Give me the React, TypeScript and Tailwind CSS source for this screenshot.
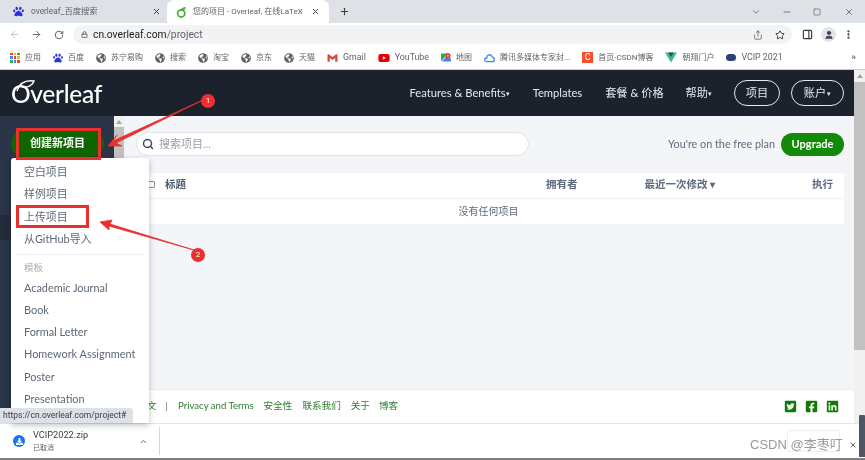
import React from "react";
import { ArrowLeft, ArrowRight, RotateCw, Lock, Plus, X, ChevronDown, Minus, Star, Share, MoreVertical, PanelRight, User, Search, ChevronUp, Square } from "lucide-react";
import { FaTwitterSquare, FaFacebookSquare, FaLinkedin, FaPaw, FaGlobeAmericas, FaYoutube, FaDownload } from "react-icons/fa";
import { SiGmail } from "react-icons/si";

const site = { fontFamily: 'Lato, "Noto Sans CJK SC", sans-serif' };
const ui = { fontFamily: 'Roboto, "Noto Sans CJK SC", sans-serif' };

function Globe() {
  return <FaGlobeAmericas className="w-[10px] h-[10px] text-[#5f6368] shrink-0" />;
}
function Paw({ size = 10 }: { size?: number }) {
  return <FaPaw className="text-[#2932e1] shrink-0" style={{ width: size, height: size }} />;
}

function Bm({ icon, label, big }: { icon: React.ReactNode; label: string; big?: boolean }) {
  return (
    <div className="flex items-center gap-[5px] shrink-0">
      {icon}
      <span className={big ? "text-[8.8px] text-[#5f6368] whitespace-nowrap" : "text-[8px] text-[#5f6368] whitespace-nowrap"}>{label}</span>
    </div>
  );
}

const menuA = ["空白项目", "样例项目", "上传项目", "从GitHub导入"];
const menuB = ["Academic Journal", "Book", "Formal Letter", "Homework Assignment", "Poster", "Presentation"];

export default function App() {
  return (
    <div className="relative w-[865px] h-[460px] overflow-hidden bg-white flex flex-col blur-[0.35px]" style={ui}>
      {/* tab strip */}
      <div className="h-[23px] bg-[#dee1e6] flex items-end shrink-0">
        <div className="w-[167px] h-[23px] flex items-center pl-[13px] pr-[6px] gap-[7px]">
          <Paw size={11} />
          <span className="text-[8.3px] text-[#5f6368] flex-1 whitespace-nowrap">overleaf_百度搜索</span>
          <X className="w-[9px] h-[9px] text-[#3c4043]" strokeWidth={2.5} />
        </div>
        <div className="w-[162px] h-[23px] bg-white rounded-t-[7px] flex items-center pl-[9px] pr-[9px] gap-[6px]">
          <svg width="11" height="12" viewBox="0 0 11 12" className="shrink-0">
            <circle cx="5.2" cy="7.4" r="3.6" fill="none" stroke="#4cae3c" strokeWidth="1.8" />
            <path d="M4 5 C5 2 7 1 10 1 C9.5 3 8 5 5.5 5Z" fill="#4cae3c" />
          </svg>
          <span className="text-[8px] text-[#5f6368] flex-1 whitespace-nowrap">您的项目 - Overleaf, 在线LaTeX</span>
          <X className="w-[9px] h-[9px] text-[#3c4043] shrink-0" strokeWidth={2.5} />
        </div>
        <div className="w-[30px] h-[23px] flex items-center justify-center">
          <Plus className="w-[11px] h-[11px] text-[#3c4043]" strokeWidth={2.5} />
        </div>
        <div className="flex-1" />
        <div className="h-[23px] flex items-center pr-[11px]">
          <ChevronDown className="w-[10px] h-[10px] text-[#5f6368] mr-[21px]" />
          <Minus className="w-[10px] h-[10px] text-[#5f6368] mr-[21px]" />
          <Square className="w-[8px] h-[8px] text-[#5f6368] mr-[23px]" strokeWidth={2} />
          <X className="w-[10px] h-[10px] text-[#5f6368]" />
        </div>
      </div>
      {/* toolbar */}
      <div className="h-[23px] bg-white flex items-center shrink-0">
        <ArrowLeft className="w-[11px] h-[11px] text-[#c3c5c8] ml-[9px]" />
        <ArrowRight className="w-[11px] h-[11px] text-[#5f6368] ml-[11px]" />
        <RotateCw className="w-[10px] h-[10px] text-[#5f6368] ml-[12px]" strokeWidth={2.4} />
        <div className="ml-[9px] w-[719px] h-[19px] bg-[#f1f3f4] rounded-full flex items-center pl-[8px] pr-[7px]">
          <Lock className="w-[7px] h-[7px] text-[#5f6368] mr-[5px]" strokeWidth={3} />
          <span className="text-[10.3px] text-[#202124]">cn.overleaf.com<span className="text-[#5f6368]">/project</span></span>
          <div className="flex-1" />
          <Share className="w-[10px] h-[10px] text-[#5f6368] mr-[12px]" />
          <Star className="w-[10px] h-[10px] text-[#3c4043]" strokeWidth={2.4} />
        </div>
        <PanelRight className="w-[11px] h-[11px] text-[#3c4043] ml-[10px]" strokeWidth={2.6} />
        <div className="ml-[8px] w-[15px] h-[15px] rounded-full bg-[#e2e4e8] flex items-center justify-center">
          <User className="w-[10px] h-[10px] text-[#3c4450] fill-[#3c4450]" />
        </div>
        <MoreVertical className="w-[11px] h-[11px] text-[#3c4043] ml-[7px]" strokeWidth={3} />
      </div>
      {/* bookmarks */}
      <div className="h-[24px] bg-white border-b border-[#c9cbce] flex items-center pl-[10px] pr-[9px] gap-[12px] shrink-0">
        <Bm
          icon={
            <div className="grid grid-cols-3 gap-[1px] w-[10px] h-[10px]">
              {["#ea4335", "#fbbc04", "#34a853", "#4285f4", "#ea4335", "#fbbc04", "#34a853", "#4285f4", "#ea4335"].map((c, i) => (
                <div key={i} style={{ background: c }} />
              ))}
            </div>
          }
          label="应用"
        />
        <Bm icon={<Paw />} label="百度" />
        <Bm icon={<Globe />} label="苏宁易购" />
        <Bm icon={<Globe />} label="搜索" />
        <Bm icon={<Globe />} label="淘宝" />
        <Bm icon={<Globe />} label="京东" />
        <Bm icon={<Globe />} label="天猫" />
        <Bm icon={<SiGmail className="w-[11px] h-[10px] text-[#d8483b]" />} label="Gmail" big />
        <Bm icon={<FaYoutube className="w-[12px] h-[12px] text-[#e60000]" />} label="YouTube" big />
        <Bm
          icon={
            <svg width="10" height="11" viewBox="0 0 11 11">
              <path d="M0 1 L7 1 L1 9 L0 9Z" fill="#34a853" />
              <path d="M1 10 L7 3 L11 7 L11 10Z" fill="#4285f4" />
              <circle cx="7.5" cy="3.5" r="3" fill="#ea4335" />
              <circle cx="7.5" cy="3.5" r="1" fill="#fbbc04" />
            </svg>
          }
          label="地图"
        />
        <Bm
          icon={
            <svg width="11" height="10" viewBox="0 0 12 10" fill="none" stroke="#2f8fe8" strokeWidth="1.4">
              <path d="M3 9 C0 9 0 5 3 5 C3 1 8 0 9 4 C12 4 12 9 9 9Z" />
            </svg>
          }
          label="腾讯多媒体专家封..."
        />
        <Bm
          icon={<div className="w-[11px] h-[11px] bg-[#f4502a] text-white text-[9px] leading-[11px] text-center">C</div>}
          label="首页-CSDN博客"
        />
        <Bm
          icon={
            <svg width="12" height="11" viewBox="0 0 13 11">
              <path d="M0 0 H13 L6.5 11Z" fill="#3fb984" />
              <path d="M3.5 0 H9.5 L6.5 5Z" fill="#34495e" />
            </svg>
          }
          label="朝翔门户"
        />
        <Bm icon={<div className="w-[10px] h-[7px] rounded-full bg-[#2f3f73]" />} label="VCIP 2021" big />
        <div className="flex-1" />
        <span className="text-[9px] text-[#5f6368] font-bold">»</span>
      </div>
      {/* page */}
      <div className="flex-1 min-h-0 flex" style={site}>
        <div className="flex-1 min-w-0 flex flex-col">
          {/* navbar */}
          <div className="h-[46px] bg-[#1b222c] flex items-center shrink-0 text-[#e6e8ec] text-[11.2px]">
            <span className="ml-[11px] mt-[3px] text-[24.5px] leading-none text-white tracking-[-0.3px] font-medium">Overleaf</span>
            <div className="flex-1" />
            <span className="whitespace-nowrap">Features &amp; Benefits<span className="text-[7px] align-[1px]">▾</span></span>
            <span className="ml-[23px]">Templates</span>
            <span className="ml-[23px]">套餐 &amp; 价格</span>
            <span className="ml-[22px]">帮助<span className="text-[7px] align-[1px]">▾</span></span>
            <span className="ml-[22px] w-[46px] h-[26px] rounded-full border border-[#e6e8ec] flex items-center justify-center">项目</span>
            <span className="ml-[11px] mr-[10px] w-[53px] h-[26px] rounded-full border border-[#e6e8ec] flex items-center justify-center">账户<span className="text-[7px] ml-[1px]">▾</span></span>
          </div>
          <div className="flex-1 min-h-0 flex">
            {/* sidebar */}
            <div className="w-[114px] bg-[#2a3547] flex flex-col shrink-0 pt-[14px]">
              <div className="ml-[11px] w-[93px] h-[27px] rounded-full bg-[#0f6600] flex items-center justify-center text-white text-[11px] font-bold">创建新项目</div>
              <div className="mt-[58px] h-[25px] bg-[#232c3a]" />
            </div>
            <div className="w-[10px] bg-[#e8e8e8] shrink-0 flex flex-col">
              <div className="h-[11px] bg-[#f1f1f1] flex justify-center pt-[4px]">
                <div className="w-0 h-0 border-x-[3px] border-x-transparent border-b-[4px] border-b-[#a3a3a3]" />
              </div>
              <div className="h-[260px] bg-[#c1c1c1]" />
            </div>
            {/* main */}
            <div className="flex-1 min-w-0 flex flex-col bg-[#f4f5f8]">
              <div className="flex-1 min-h-0 pl-[9px] pr-[10px] pt-[16px]">
                <div className="flex items-center h-[24px]">
                  <div className="w-[393px] h-[24px] rounded-full bg-white border border-[#e3e5ea] flex items-center pl-[5px] gap-[5px] ml-[3px]">
                    <Search className="w-[12px] h-[12px] text-[#3b4a63]" strokeWidth={3} />
                    <span className="text-[11px] text-[#9aa0aa]">搜索项目...</span>
                  </div>
                  <div className="flex-1" />
                  <span className="text-[10.8px] text-[#5f6a7d] mr-[6px] whitespace-nowrap">You're on the free plan</span>
                  <span className="w-[63px] h-[23px] rounded-full bg-[#138a07] text-white text-[11px] font-bold flex items-center justify-center">Upgrade</span>
                </div>
                <div className="mt-[17px] bg-white h-[51px] flex flex-col">
                  <div className="h-[26px] pb-[2px] border-b border-[#eef0f3] flex items-center text-[10.5px] font-bold text-[#5f6a7d] pr-[11px]">
                    <span className="w-[7px] h-[7px] border border-[#8b93a1] ml-[15px] rounded-[1px]" />
                    <span className="ml-[10px] text-[#4f5b6e]">标题</span>
                    <span className="ml-[360px]">拥有者</span>
                    <span className="ml-[67px]">最近一次修改 <span className="text-[10px]">▾</span></span>
                    <div className="flex-1" />
                    <span>执行</span>
                  </div>
                  <div className="flex-1 flex items-center justify-center text-[10px] text-[#5f6a7d]">没有任何项目</div>
                </div>
              </div>
              <div className="h-[34px] bg-white border-t border-[#e9ebef] shrink-0 flex items-center text-[9.6px] text-[#2f7d32] pl-[23px] pr-[15px]">
                <span>文</span>
                <span className="ml-[9px] text-[#5f6a7d]">|</span>
                <span className="ml-[10px]">Privacy and Terms</span>
                <span className="ml-[10px]">安全性</span>
                <span className="ml-[10px]">联系我们</span>
                <span className="ml-[10px]">关于</span>
                <span className="ml-[9px]">博客</span>
                <div className="flex-1" />
                <FaTwitterSquare className="w-[13px] h-[13px] text-[#0f7a05]" />
                <FaFacebookSquare className="w-[13px] h-[13px] text-[#0f7a05] ml-[8px]" />
                <FaLinkedin className="w-[13px] h-[13px] text-[#0f7a05] ml-[8px]" />
              </div>
            </div>
          </div>
        </div>
        {/* page scrollbar */}
        <div className="w-[11px] bg-[#f1f1f1] shrink-0 flex flex-col">
          <div className="h-[12px] flex justify-center pt-[4px]">
            <div className="w-0 h-0 border-x-[3px] border-x-transparent border-b-[4px] border-b-[#a3a3a3]" />
          </div>
          <div className="h-[268px] bg-[#c1c1c1]" />
        </div>
      </div>
      {/* download bar */}
      <div className="h-[37px] bg-white border-t border-[#e3e4e6] border-b-2 border-b-[#7d7d7d] flex items-center shrink-0">
        <div className="ml-[13px] w-[12px] h-[12px] rounded-full bg-[#1a73e8] flex items-center justify-center">
          <FaDownload className="w-[7px] h-[7px] text-white" />
        </div>
        <div className="ml-[8px] flex flex-col w-[100px]">
          <span className="text-[9.2px] text-[#3c4043] leading-[12px]">VCIP2022.zip</span>
          <span className="text-[7px] text-[#5f6368] leading-[12px] mt-[1px]">已取消</span>
        </div>
        <ChevronUp className="w-[9px] h-[9px] text-[#5f6368] ml-[6px]" strokeWidth={2.5} />
        <div className="ml-[11px] w-px h-[28px] bg-[#d6d7d9]" />
      </div>

      {/* dropdown menu */}
      <div className="absolute left-[11px] top-[158px] w-[138px] h-[265px] bg-white rounded-t-[3px] shadow-[0_2px_6px_rgba(0,0,0,0.25)] pt-[3px] text-[10.9px] text-[#5d6879]" style={site}>
        {menuA.map((t) => (
          <div key={t} className="h-[22.4px] flex items-center pl-[13px]">{t}</div>
        ))}
        <div className="mx-[5px] mt-[3px] h-px bg-[#eceef1]" />
        <div className="h-[22px] pt-[5px] flex items-center pl-[13px] text-[9.5px] text-[#a7acb5]">模板</div>
        {menuB.map((t) => (
          <div key={t} className="h-[22.3px] flex items-center pl-[13px] whitespace-nowrap">{t}</div>
        ))}
      </div>
      {/* status tooltip */}
      <div className="absolute left-0 top-[408px] w-[133px] h-[15px] bg-[#dee1e6] rounded-tr-[3px] flex items-center pl-[3px] text-[8.5px] text-[#3c4043] whitespace-nowrap">https://cn.overleaf.com/project#</div>

      {/* logo leaf */}
      <svg className="absolute left-[11px] top-[78px]" width="26" height="14" viewBox="0 0 26 14" fill="none">
        <path d="M6 13 C8 6 14 2 23 3 C22 7 17 10 11 9" stroke="#fff" strokeWidth="1.4" />
      </svg>

      {/* annotation frames */}
      <div className="absolute left-[16px] top-[128px] w-[85px] h-[32px] border-[3px] border-[#e8312f]" />
      <div className="absolute left-[16px] top-[205px] w-[73px] h-[23px] border-[3px] border-[#e8312f]" />
      <svg className="absolute left-0 top-0 pointer-events-none" width="865" height="460" viewBox="0 0 865 460" fill="none">
        <path d="M203 100 L113 141 L117 135 L108 146 L122 146 L116 143 L203 100Z" fill="#e8312f" stroke="#e8312f" strokeWidth="0.8" />
        <path d="M194 250 L110 224 L112 220 L100 222 L109 230 L109 226 L194 250Z" fill="#e8312f" stroke="#e8312f" strokeWidth="0.8" />
      </svg>
      <div className="absolute left-[201px] top-[94px] w-[14px] h-[14px] rounded-full bg-[#ee2f2f] text-white text-[8px] flex items-center justify-center">1</div>
      <div className="absolute left-[191px] top-[248px] w-[14px] h-[14px] rounded-full bg-[#ee2f2f] text-white text-[8px] flex items-center justify-center">2</div>

      {/* watermark */}
      <div className="absolute left-[787px] top-[430px] w-[53px] h-[22px] border border-[#eceef1] rounded-[2px]" />
      <div className="absolute left-[750px] top-[435px] text-[13px] text-[#9a9a9a] whitespace-nowrap flex items-center" style={{ fontFamily: '"Liberation Sans", "Noto Sans CJK SC", sans-serif' }}>
        <span>CSDN @李枣叮</span>
        <X className="w-[8px] h-[8px] text-[#666] ml-[6px]" strokeWidth={3} />
      </div>
      <div className="absolute left-[859px] top-[415px] w-[6px] h-[42px] bg-[#4d5561] rounded-t-[1px]" />
    </div>
  );
}
